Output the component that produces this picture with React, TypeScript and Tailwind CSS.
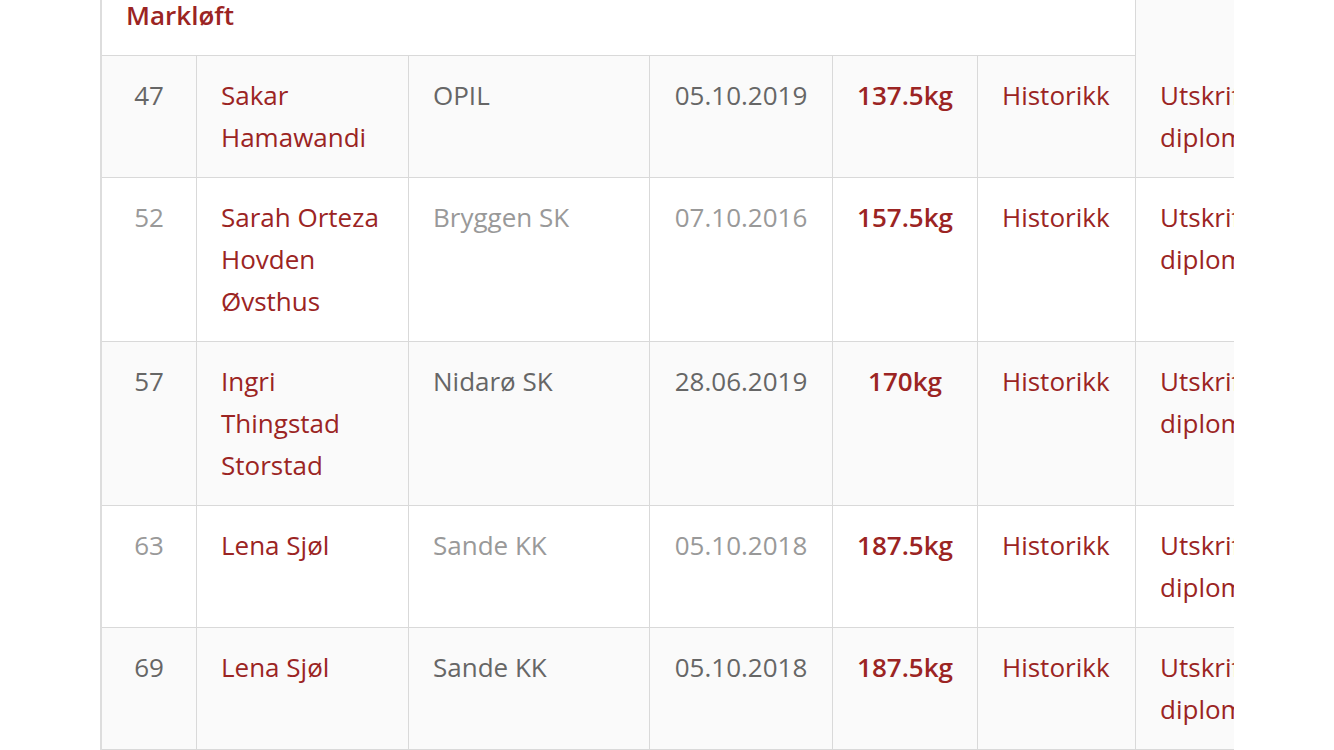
const rows = [
  { nr: "47", name: "Sakar Hamawandi", club: "OPIL", date: "05.10.2019", kg: "137.5kg", shade: true },
  { nr: "52", name: "Sarah Orteza Hovden Øvsthus", club: "Bryggen SK", date: "07.10.2016", kg: "157.5kg", shade: false },
  { nr: "57", name: "Ingri Thingstad Storstad", club: "Nidarø SK", date: "28.06.2019", kg: "170kg", shade: true },
  { nr: "63", name: "Lena Sjøl", club: "Sande KK", date: "05.10.2018", kg: "187.5kg", shade: false },
  { nr: "69", name: "Lena Sjøl", club: "Sande KK", date: "05.10.2018", kg: "187.5kg", shade: true },
]

export default function App() {
  return (
    <div className="min-h-screen bg-white" style={{ fontFamily: '"Open Sans", sans-serif' }}>
      <div className="ml-[100px] w-[1134px] overflow-hidden">
        <table className="table-fixed border-separate border-spacing-0 border-l-2 border-[#dddddd] text-[26px] leading-[42px] w-[1261px]">
          <colgroup>
            <col className="w-[95px]" />
            <col className="w-[212px]" />
            <col className="w-[241px]" />
            <col className="w-[183px]" />
            <col className="w-[145px]" />
            <col className="w-[158px]" />
            <col className="w-[226px]" />
          </colgroup>
          <tbody>
            <tr>
              <td colSpan={6} className="h-[56px] align-top px-6 border-r border-b border-[#d9d9d9] bg-white">
                <span className="block leading-[30px] font-semibold text-[#9b2423]">Markløft</span>
              </td>
              <td className="bg-[#fafafa]"></td>
            </tr>
            {rows.map((r) => {
              const bg = r.shade ? "bg-[#fafafa]" : "bg-white"
              const muted = r.shade ? "text-[#666]" : "text-[#999]"
              const cell = "align-top pt-[18px] pb-[19px] border-r border-b border-[#d9d9d9] " + bg
              return (
                <tr key={r.nr}>
                  <td className={cell + " text-center " + muted}>{r.nr}</td>
                  <td className={cell + " px-6 text-[#9b2423]"}>{r.name}</td>
                  <td className={cell + " px-6 " + muted}>{r.club}</td>
                  <td className={cell + " px-6 text-center " + muted}>{r.date}</td>
                  <td className={cell + " px-2 text-center font-semibold text-[#9b2423]"}>{r.kg}</td>
                  <td className={cell + " px-6 text-[#9b2423]"}>Historikk</td>
                  <td className={cell + " px-6 text-[#9b2423]"}>Utskrift diplom</td>
                </tr>
              )
            })}
          </tbody>
        </table>
      </div>
    </div>
  )
}
